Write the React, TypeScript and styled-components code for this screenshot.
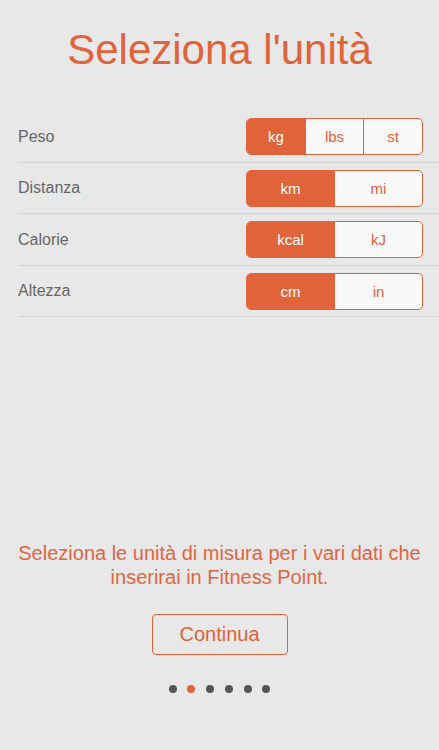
import React, { useState } from "react";
import styled, { createGlobalStyle } from "styled-components";

const ORANGE = "#e0633a";

const Global = createGlobalStyle`
  html, body { margin: 0; padding: 0; background: #e8e8e8; }
  body { font-family: "Liberation Sans", Arial, sans-serif; }
`;

const Page = styled.div`
  height: 750px;
  display: flex;
  flex-direction: column;
  background: #e8e8e8;
  box-sizing: border-box;
  padding-top: 25px;
  padding-bottom: 57px;
`;

const Title = styled.h1`
  margin: 0;
  font-weight: 400;
  font-size: 42px;
  line-height: 1.2;
  color: ${ORANGE};
  text-align: center;
`;

const List = styled.div`
  margin-top: 36px;
  margin-left: 18px;
  display: flex;
  flex-direction: column;
`;

const Row = styled.div`
  height: 51.5px;
  box-sizing: border-box;
  border-bottom: 1px solid #d4d4d4;
  display: flex;
  align-items: center;
  justify-content: space-between;
  padding-right: 16px;
`;

const Label = styled.span`
  font-size: 16px;
  color: #666;
`;

const Segmented = styled.div`
  width: 177px;
  height: 37px;
  box-sizing: border-box;
  display: flex;
  border: 1px solid ${ORANGE};
  border-radius: 5px;
  overflow: hidden;
  background: #f8f8f8;
`;

const Segment = styled.button<{ $active: boolean }>`
  flex: 1;
  border: none;
  margin: 0;
  padding: 0;
  font-family: inherit;
  font-size: 15px;
  cursor: pointer;
  background: ${(p) => (p.$active ? ORANGE : "transparent")};
  color: ${(p) => (p.$active ? "#fff" : ORANGE)};
  & + & {
    border-left: 1px solid ${ORANGE};
  }
`;

const Bottom = styled.div`
  margin-top: auto;
  display: flex;
  flex-direction: column;
  align-items: center;
`;

const Info = styled.p`
  margin: 0;
  font-size: 20px;
  line-height: 24px;
  color: #e2653f;
  text-align: center;
  padding: 0 14px;
`;

const ContinueButton = styled.button`
  margin-top: 25px;
  width: 136px;
  height: 41px;
  box-sizing: border-box;
  border: 1px solid ${ORANGE};
  border-radius: 4px;
  background: transparent;
  color: ${ORANGE};
  font-family: inherit;
  font-size: 20px;
  cursor: pointer;
`;

const Dots = styled.div`
  margin-top: 30px;
  display: flex;
  gap: 10.7px;
`;

const Dot = styled.span<{ $active: boolean }>`
  width: 8px;
  height: 8px;
  border-radius: 50%;
  background: ${(p) => (p.$active ? ORANGE : "#555")};
`;

const rows = [
  { label: "Peso", options: ["kg", "lbs", "st"] },
  { label: "Distanza", options: ["km", "mi"] },
  { label: "Calorie", options: ["kcal", "kJ"] },
  { label: "Altezza", options: ["cm", "in"] },
];

export default function App() {
  const [sel, setSel] = useState<number[]>([0, 0, 0, 0]);
  return (
    <>
      <Global />
      <Page>
        <Title>Seleziona l'unità</Title>
        <List>
          {rows.map((r, i) => (
            <Row key={r.label}>
              <Label>{r.label}</Label>
              <Segmented>
                {r.options.map((o, j) => (
                  <Segment
                    key={o}
                    $active={sel[i] === j}
                    onClick={() => setSel((s) => s.map((v, k) => (k === i ? j : v)))}
                  >
                    {o}
                  </Segment>
                ))}
              </Segmented>
            </Row>
          ))}
        </List>
        <Bottom>
          <Info>
            Seleziona le unità di misura per i vari dati che inserirai in Fitness Point.
          </Info>
          <ContinueButton>Continua</ContinueButton>
          <Dots>
            {[0, 1, 2, 3, 4, 5].map((d) => (
              <Dot key={d} $active={d === 1} />
            ))}
          </Dots>
        </Bottom>
      </Page>
    </>
  );
}
